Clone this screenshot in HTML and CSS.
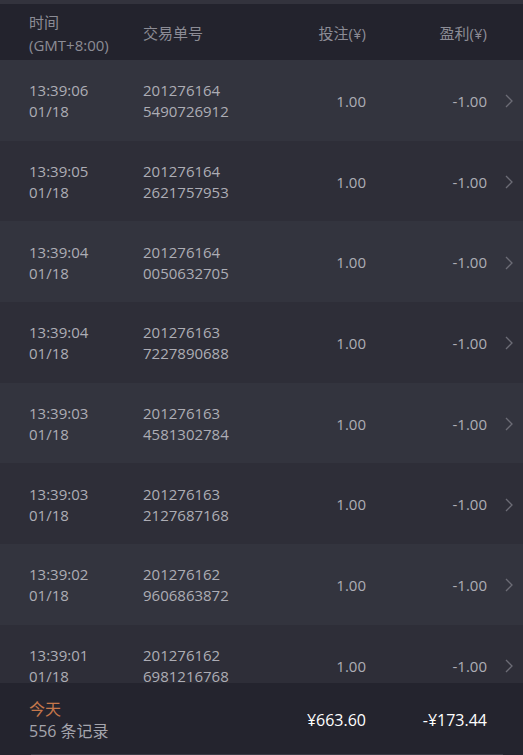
FILE: index.html
```html
<!DOCTYPE html>
<html lang="zh-CN">
<head>
<meta charset="utf-8">
<title>投注记录</title>
<link rel="stylesheet" href="styles.css">
</head>
<body>
<div class="app">
  <div class="top-band"></div>
  <div class="header grid">
    <div class="cell"><div>时间</div><div>(GMT+8:00)</div></div>
    <div class="cell">交易单号</div>
    <div class="cell num">投注(¥)</div>
    <div class="cell num">盈利(¥)</div>
    <div></div>
  </div>
  <div class="list">
    <div class="row grid">
      <div class="cell"><div>13:39:06</div><div>01/18</div></div>
      <div class="cell"><div>201276164</div><div>5490726912</div></div>
      <div class="cell num">1.00</div>
      <div class="cell num">-1.00</div>
      <div class="chev"><svg width="8" height="14" viewBox="0 0 8 14"><path d="M1 1l6 6-6 6" fill="none" stroke="#6c6c76" stroke-width="1.3"/></svg></div>
    </div>
    <div class="row grid">
      <div class="cell"><div>13:39:05</div><div>01/18</div></div>
      <div class="cell"><div>201276164</div><div>2621757953</div></div>
      <div class="cell num">1.00</div>
      <div class="cell num">-1.00</div>
      <div class="chev"><svg width="8" height="14" viewBox="0 0 8 14"><path d="M1 1l6 6-6 6" fill="none" stroke="#6c6c76" stroke-width="1.3"/></svg></div>
    </div>
    <div class="row grid">
      <div class="cell"><div>13:39:04</div><div>01/18</div></div>
      <div class="cell"><div>201276164</div><div>0050632705</div></div>
      <div class="cell num">1.00</div>
      <div class="cell num">-1.00</div>
      <div class="chev"><svg width="8" height="14" viewBox="0 0 8 14"><path d="M1 1l6 6-6 6" fill="none" stroke="#6c6c76" stroke-width="1.3"/></svg></div>
    </div>
    <div class="row grid">
      <div class="cell"><div>13:39:04</div><div>01/18</div></div>
      <div class="cell"><div>201276163</div><div>7227890688</div></div>
      <div class="cell num">1.00</div>
      <div class="cell num">-1.00</div>
      <div class="chev"><svg width="8" height="14" viewBox="0 0 8 14"><path d="M1 1l6 6-6 6" fill="none" stroke="#6c6c76" stroke-width="1.3"/></svg></div>
    </div>
    <div class="row grid">
      <div class="cell"><div>13:39:03</div><div>01/18</div></div>
      <div class="cell"><div>201276163</div><div>4581302784</div></div>
      <div class="cell num">1.00</div>
      <div class="cell num">-1.00</div>
      <div class="chev"><svg width="8" height="14" viewBox="0 0 8 14"><path d="M1 1l6 6-6 6" fill="none" stroke="#6c6c76" stroke-width="1.3"/></svg></div>
    </div>
    <div class="row grid">
      <div class="cell"><div>13:39:03</div><div>01/18</div></div>
      <div class="cell"><div>201276163</div><div>2127687168</div></div>
      <div class="cell num">1.00</div>
      <div class="cell num">-1.00</div>
      <div class="chev"><svg width="8" height="14" viewBox="0 0 8 14"><path d="M1 1l6 6-6 6" fill="none" stroke="#6c6c76" stroke-width="1.3"/></svg></div>
    </div>
    <div class="row grid">
      <div class="cell"><div>13:39:02</div><div>01/18</div></div>
      <div class="cell"><div>201276162</div><div>9606863872</div></div>
      <div class="cell num">1.00</div>
      <div class="cell num">-1.00</div>
      <div class="chev"><svg width="8" height="14" viewBox="0 0 8 14"><path d="M1 1l6 6-6 6" fill="none" stroke="#6c6c76" stroke-width="1.3"/></svg></div>
    </div>
    <div class="row grid">
      <div class="cell"><div>13:39:01</div><div>01/18</div></div>
      <div class="cell"><div>201276162</div><div>6981216768</div></div>
      <div class="cell num">1.00</div>
      <div class="cell num">-1.00</div>
      <div class="chev"><svg width="8" height="14" viewBox="0 0 8 14"><path d="M1 1l6 6-6 6" fill="none" stroke="#6c6c76" stroke-width="1.3"/></svg></div>
    </div>
  </div>
  <div class="footer">
    <div class="footer-main grid">
      <div class="summary"><div class="today">今天</div><div class="count">556 条记录</div></div>
      <div></div>
      <div class="cell num total">¥663.60</div>
      <div class="cell num total">-¥173.44</div>
      <div></div>
    </div>
    <div class="scroll-line"></div>
  </div>
</div>
</body>
</html>
```

FILE: styles.css
```css
* { box-sizing: border-box; }
html, body {
  margin: 0;
  padding: 0;
  background: #24242e;
}
body {
  font-family: "Open Sans", "Noto Sans CJK SC", sans-serif;
  font-size: 15px;
  color: #adadb5;
}
.app {
  height: 100vh;
  display: flex;
  flex-direction: column;
  overflow: hidden;
}
.top-band {
  height: 4px;
  background: #33333d;
  flex: none;
}
.grid {
  display: grid;
  grid-template-columns: 114px 1fr 100px 121px 36px;
  padding-left: 29px;
  align-items: center;
}
.header {
  height: 56px;
  flex: none;
  background: #23232d;
  color: #8c8c95;
  line-height: 23px;
  padding-top: 3px;
}
.num { text-align: right; }
.list {
  flex: 1;
  overflow: hidden;
}
.row {
  height: 80.7px;
  line-height: 21px;
  padding-top: 2px;
  background: #33343e;
}
.row:nth-child(even) { background: #2e2e38; }
.chev {
  display: flex;
  align-items: center;
  padding-left: 18px;
}
.chev svg { display: block; }
.footer {
  height: 72px;
  flex: none;
  background: #24242e;
  display: flex;
  flex-direction: column;
}
.footer-main {
  flex: 1;
  padding-top: 3px;
}
.summary { line-height: 22px; font-size: 16px; }
.today { color: #c5774b; }
.count { color: #a5a5ad; }
.total { color: #ffffff; font-size: 16px; }
.scroll-line {
  height: 1px;
  margin: 0 20px 0 31px;
  background: #3c3c46;
}
```
